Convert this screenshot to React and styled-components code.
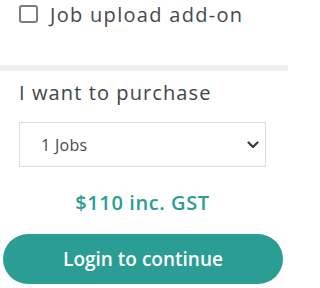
import React, { useState } from 'react'
import styled, { createGlobalStyle } from 'styled-components'

const GlobalStyle = createGlobalStyle`
body {
    margin: 0;
    background: #fff;
    font-family: "Open Sans", "Liberation Sans", sans-serif;
    color: #3f4446;
}
`;

const App = () => {
    const [addOn, setAddOn] = useState(false);
    const [jobs, setJobs] = useState('1');

    return (
        <>
            <GlobalStyle />
            <Panel>
                <AddOnRow>
                    <CheckBox type="checkbox" checked={addOn} onChange={() => setAddOn(!addOn)} />
                    <span>Job upload add-on</span>
                </AddOnRow>

                <Divider />

                <PurchaseSection>
                    <Heading>I want to purchase</Heading>
                    <SelectWrap>
                        <Select value={jobs} onChange={(e) => setJobs(e.target.value)}>
                            <option value="1">1 Jobs</option>
                            <option value="2">2 Jobs</option>
                            <option value="5">5 Jobs</option>
                        </Select>
                        <Chevron viewBox="0 0 12 8" width="12" height="8">
                            <path d="M1.5 1.5 6 6l4.5-4.5" fill="none" stroke="#3a3a3a" strokeWidth="2.2" strokeLinecap="round" strokeLinejoin="round" />
                        </Chevron>
                    </SelectWrap>
                    <Price>$110 inc. GST</Price>
                </PurchaseSection>

                <LoginButton>Login to continue</LoginButton>
            </Panel>
        </>
    )
}

export default App

const Panel = styled.div`
width: 288px;
height: 288px;
display: flex;
flex-direction: column;
`;

const AddOnRow = styled.label`
display: flex;
align-items: center;
gap: 12px;
padding: 2px 19px 0;
height: 24px;
font-size: 20px;
letter-spacing: 1.3px;
color: #444a4c;
cursor: pointer;
`;

const CheckBox = styled.input`
appearance: none;
margin: 0;
width: 19px;
height: 18px;
border: 2px solid #7a7d80;
border-radius: 3px;
box-sizing: border-box;
background: #fff;
flex-shrink: 0;
&:checked {
    background: #2a9d94;
    border-color: #2a9d94;
}
`;

const Divider = styled.div`
height: 6px;
margin-top: 39px;
background: #eef1f4;
`;

const PurchaseSection = styled.div`
padding: 0 22px 0 19px;
display: flex;
flex-direction: column;
`;

const Heading = styled.h2`
margin: 10px 0 0;
font-size: 20px;
font-weight: 400;
letter-spacing: 1.1px;
line-height: 24px;
color: #3f4446;
`;

const SelectWrap = styled.div`
position: relative;
margin-top: 17px;
`;

const Select = styled.select`
appearance: none;
width: 100%;
height: 45px;
box-sizing: border-box;
border: 1px solid #dcdcdc;
border-radius: 0;
background: #fff;
padding: 0 0 0 21px;
font-family: inherit;
font-size: 16px;
letter-spacing: 0.3px;
color: #4a4a4a;
outline: none;
`;

const Chevron = styled.svg`
position: absolute;
right: 7px;
top: 19px;
pointer-events: none;
`;

const Price = styled.div`
margin-top: 24px;
text-align: center;
font-size: 20px;
font-weight: 600;
letter-spacing: 0.6px;
line-height: 24px;
color: #2a9d94;
`;

const LoginButton = styled.button`
margin: 19px 5px 0 3px;
height: 50px;
border: none;
border-radius: 25px;
background: #2a9d94;
color: #fff;
font-family: inherit;
font-size: 19px;
font-weight: 600;
cursor: pointer;
`;
